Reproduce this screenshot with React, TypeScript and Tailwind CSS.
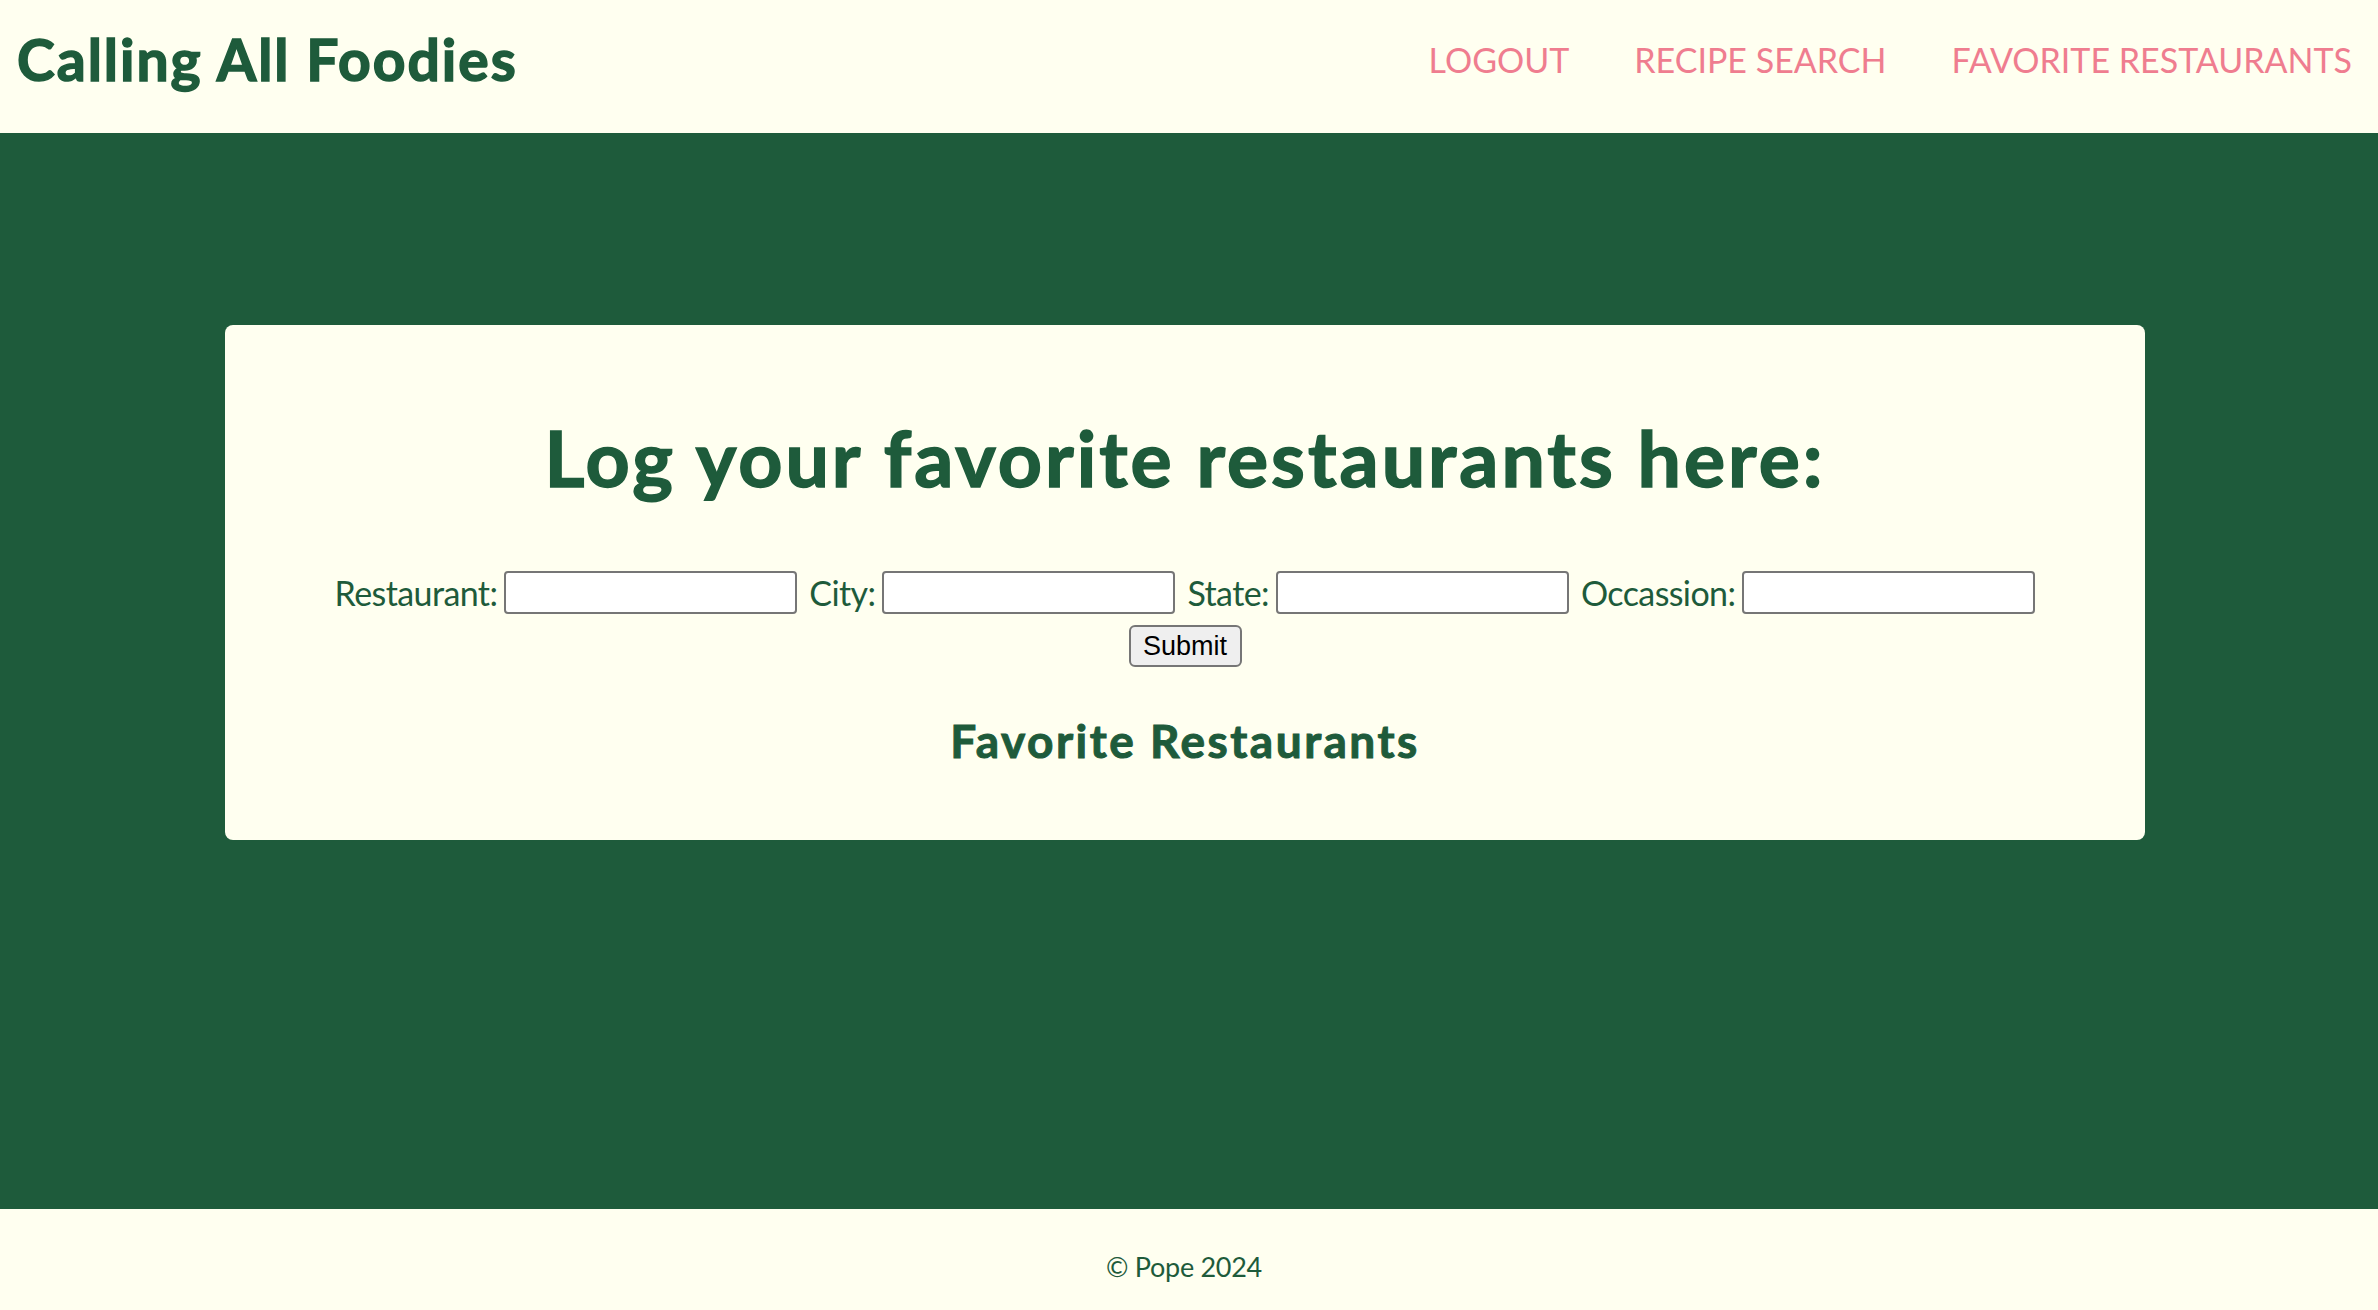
const navLinks = ["LOGOUT", "RECIPE SEARCH", "FAVORITE RESTAURANTS"];

const fields = ["Restaurant:", "City:", "State:", "Occassion:"];

const Header = () => {
  return (
    <header className="flex h-[133px] items-center justify-between bg-[#fffff0] pb-[14px] pl-[17px] pr-[26px]">
      <h1 className="text-[57px] font-bold leading-none tracking-[2px] text-[#1e5b3b] [-webkit-text-stroke:1.5px_#1e5b3b]">
        Calling All Foodies
      </h1>
      <nav className="flex gap-[65px]">
        {navLinks.map((link) => (
          <a
            key={link}
            href="#"
            className="text-[34px] leading-none tracking-[0px] text-[#ef7d8f]"
          >
            {link}
          </a>
        ))}
      </nav>
    </header>
  );
};

const RestaurantForm = () => {
  return (
    <form className="flex flex-col items-center">
      <div className="flex items-center">
        {fields.map((field, i) => (
          <div key={field} className={`flex items-center ${i > 0 ? "ml-[12px]" : ""}`}>
            <label className="mr-[7px] text-[34px] leading-none tracking-[-0.6px] text-[#1e5b3b]">
              {field}
            </label>
            <input
              type="text"
              className="h-[43px] w-[293px] rounded-[4px] border-2 border-[#767676] bg-white"
            />
          </div>
        ))}
      </div>
      <button
        type="button"
        className="mt-[11px] h-[42px] w-[113px] rounded-[6px] border-2 border-[#767676] bg-[#efefef] text-[27px] leading-none text-black [font-family:'Liberation_Sans',Arial,sans-serif]"
      >
        Submit
      </button>
    </form>
  );
};

export default function App() {
  return (
    <div className="flex min-h-[1310px] flex-col bg-[#fffff0] [font-family:Lato,'Open_Sans',sans-serif]">
      <Header />
      <main className="h-[1076px] bg-[#1e5b3b] pt-[192px]">
        <section className="ml-[225px] flex h-[515px] w-[1920px] flex-col items-center rounded-[8px] bg-[#fffff0] pt-[94px]">
          <h2 className="text-[77px] font-bold leading-none tracking-[3px] text-[#1e5b3b] [-webkit-text-stroke:1.5px_#1e5b3b]">
            Log your favorite restaurants here:
          </h2>
          <div className="mt-[75px]">
            <RestaurantForm />
          </div>
          <h3 className="mt-[51px] text-[46px] font-bold leading-none tracking-[2.5px] text-[#1e5b3b] [-webkit-text-stroke:1px_#1e5b3b]">
            Favorite Restaurants
          </h3>
        </section>
      </main>
      <footer className="flex h-[101px] items-center justify-center pt-[14px]">
        <p className="mr-[10px] text-[27px] leading-none tracking-[-0.3px] text-[#1e5b3b]">© Pope 2024</p>
      </footer>
    </div>
  );
}
